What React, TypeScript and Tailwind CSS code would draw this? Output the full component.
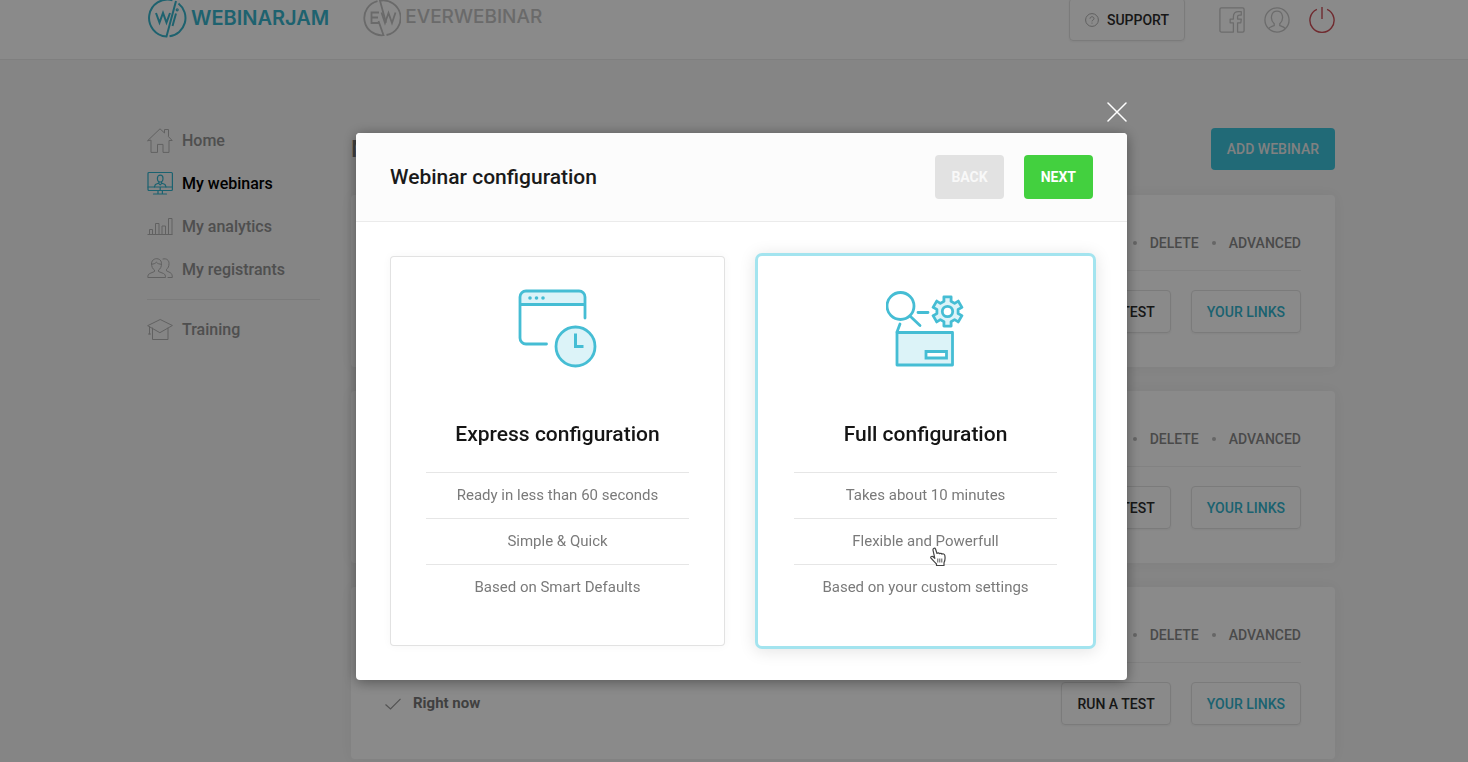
import React from "react";

const navItems = [
  { label: "Home", icon: HomeIcon },
  { label: "My webinars", icon: WebinarIcon, active: true },
  { label: "My analytics", icon: AnalyticsIcon },
  { label: "My registrants", icon: RegistrantsIcon },
];

const webinars = [{ id: 1 }, { id: 2 }, { id: 3, schedule: "Right now" }];

const options = [
  {
    title: "Express configuration",
    icon: ExpressIcon,
    points: ["Ready in less than 60 seconds", "Simple & Quick", "Based on Smart Defaults"],
  },
  {
    title: "Full configuration",
    icon: FullIcon,
    points: ["Takes about 10 minutes", "Flexible and Powerfull", "Based on your custom settings"],
    selected: true,
  },
];

function HomeIcon() {
  return (
    <svg viewBox="0 0 26 26" className="h-[26px] w-[26px]" fill="none" stroke="currentColor" strokeLinejoin="round" strokeLinecap="round">
      <path d="M.8 12.500 13 .8l4.500 4.200V1.500h4v7.200l3.700 3.800H22v11.900h-6v-8h-5.500v8H4V12.500z" />
    </svg>
  );
}

function WebinarIcon() {
  return (
    <svg viewBox="0 0 26 26" className="h-[26px] w-[26px]" fill="none" stroke="currentColor" strokeWidth="1.200" strokeLinejoin="round" strokeLinecap="round">
      <rect x="1" y="1.500" width="24.400" height="18" rx="1" />
      <path d="M1 16h24.400M11 19.500v3.200M15.400 19.500v3.200M6.500 23h13M13.200 16v3" />
      <path d="M10.400 7.200c0-4 5.600-4 5.600 0 0 2-1 3.800-2.800 3.800s-2.800-1.800-2.800-3.800zM11.900 10.800V12L8.400 13.500 7.400 16M14.500 10.800V12l3.500 1.500 1 2.500M11.600 12.300l1.600 1.600 1.600-1.600" />
    </svg>
  );
}

function AnalyticsIcon() {
  return (
    <svg viewBox="0 0 26 26" className="h-[26px] w-[26px]" fill="none" stroke="currentColor">
      <path d="M.5 20.500h25M2.500 20.500v-5h3v5M8.500 20.500V9.500h3.500v11M15 20.500V12h3.500v8.500M21.500 20.500V4.500H25v16" />
    </svg>
  );
}

function RegistrantsIcon() {
  return (
    <svg viewBox="0 0 26 26" className="h-[26px] w-[26px]" fill="none" stroke="currentColor" strokeLinejoin="round" strokeLinecap="round">
      <path d="M4.500 6.500c0-6.500 10-6.500 10 0 0 3-1 5.500-3 6.500v1.500l5 2c1.500.6 2 2 2 4H.8c0-2 .5-3.400 2-4l4.700-2V13c-2-1-3-3.500-3-6.500z" />
      <path d="M4.700 7.200c2 0 3.600-.8 4.600-2 1.200 1.400 3 2 5 2M16 2c3.500-1 6 1.200 6 4.500 0 3-1 4.800-2.500 5.800v1.500l3.800 1.900c1.500.8 2 2.500 2 4.800H21" />
    </svg>
  );
}

function TrainingIcon() {
  return (
    <svg viewBox="0 0 26 26" className="h-[26px] w-[26px]" fill="none" stroke="currentColor" strokeLinejoin="round" strokeLinecap="round">
      <path d="M1 8.500 13.200 2.500 25.400 8.500 13.200 15.500zM5.500 11v11.500H21V11M2.500 9.500V17M1.500 17h2" />
    </svg>
  );
}

function ExpressIcon() {
  return (
    <svg viewBox="0 0 80 80" className="h-20 w-20" fill="none" stroke="#45bdd4" strokeWidth="2.800" strokeLinecap="round">
      <path d="M2 16.500V9A6 6 0 0 1 8 3H61a6 6 0 0 1 6 6v7.500z" fill="#dcf3f8" stroke="none" />
      <path d="M67 30V9a6 6 0 0 0-6-6H8a6 6 0 0 0-6 6v41a6 6 0 0 0 6 6H28.500M2 16.500h65" />
      <g fill="#45bdd4" stroke="none">
        <circle cx="12" cy="10" r="1.800" />
        <circle cx="18.500" cy="10" r="1.800" />
        <circle cx="25" cy="10" r="1.800" />
      </g>
      <circle cx="57.500" cy="58.500" r="19.500" fill="#dcf3f8" />
      <path d="M57.500 47v11.500h6.500" strokeWidth="3" strokeLinecap="square" />
    </svg>
  );
}

// six square teeth around the hub
const gearPoints = Array.from({ length: 6 }, (_, i) => i * 60 - 90)
  .flatMap((a) => [
    [a - 19, 10.8],
    [a - 14, 15],
    [a + 14, 15],
    [a + 19, 10.8],
  ])
  .map(([a, r]) => {
    const t = (a * Math.PI) / 180;
    return `${(61.5 + r * Math.cos(t)).toFixed(2)},${(23.5 + r * Math.sin(t)).toFixed(2)}`;
  })
  .join(" ");

function FullIcon() {
  return (
    <svg viewBox="0 0 80 80" className="h-20 w-20" fill="none" stroke="#45bdd4" strokeWidth="2.800" strokeLinecap="round">
      <circle cx="14.500" cy="18" r="13.500" />
      <path d="M24.500 28.500 34 37.500M32 24.500h10M14 36l-3 8" />
      <polygon points={gearPoints} fill="#dcf3f8" strokeLinejoin="round" />
      <circle cx="61.500" cy="23.500" r="5.200" fill="#fff" />
      <path d="M11 44.500h55.500v32.500H11z" fill="#dcf3f8" strokeLinejoin="round" />
      <path d="M40 63.500h20.500v6.500H40z" fill="#fff" strokeLinecap="butt" />
    </svg>
  );
}

function WebinarCard({ schedule }: { schedule?: string }) {
  return (
    <article className="rounded bg-white px-[34px] pb-[34px] shadow-[0_0_14px_rgba(0,0,0,0.04)]">
      <div className="flex h-[76px] items-center justify-end gap-[13px] border-b border-[#f0f0f0] pt-5 text-sm font-medium text-[#8a8a8a]">
        <span className="h-1 w-1 rounded-full bg-[#bcbcbc]" />
        <a href="#delete">DELETE</a>
        <span className="h-1 w-1 rounded-full bg-[#bcbcbc]" />
        <a href="#advanced">ADVANCED</a>
      </div>
      <div className="flex items-center pt-[19px]">
        {schedule && (
          <>
            <svg viewBox="0 0 16 12" className="mr-3 h-3 w-4" fill="none" stroke="#999" strokeWidth="1.200">
              <path d="M.5 6.500 5.500 11 15.500.8" />
            </svg>
            <span className="text-[15px] font-bold text-[#777]">{schedule}</span>
          </>
        )}
        <button className="ml-auto h-[43px] rounded border border-[#e4e4e4] px-[15px] text-sm font-medium text-[#2b2b2b] shadow-xs">
          RUN A TEST
        </button>
        <button className="ml-5 h-[43px] rounded border border-[#e4e4e4] px-[15px] text-sm font-medium text-[#33b5cf] shadow-xs">
          YOUR LINKS
        </button>
      </div>
    </article>
  );
}

function Header() {
  return (
    <header className="-mt-5 h-20 border-b border-[#eaeaea] bg-white pl-3.5">
      <div className="mx-auto flex h-full max-w-[1188px] items-center">
        <a href="#webinarjam" className="flex items-center gap-1 pb-1 font-['Inter'] text-xl font-semibold text-[#39b6cd]">
          <svg viewBox="0 0 40 40" className="h-10 w-10" fill="none" stroke="currentColor" strokeWidth="2">
            <path d="M25.500 2.200A18.500 18.500 0 1 0 19.500 38.500L29 3M31.500 5.500A18.500 18.500 0 0 1 22.500 38.300" />
            <path d="M9 15l3.500 9.500L16 15l3.500 9.500L23 15M29 15.500l-3.500 12.500" />
            <circle cx="30.200" cy="11.800" r=".6" />
          </svg>
          WEBINARJAM
        </a>
        <a href="#everwebinar" className="ml-[34px] flex items-center gap-1 pb-1 font-['Inter'] text-[19px] font-medium text-[#c4c4c4]">
          <svg viewBox="0 0 38 38" className="h-[38px] w-[38px]" fill="none" stroke="currentColor" strokeWidth="1.800">
            <path d="M14.500 2.200A17.300 17.300 0 0 0 20.500 36.200L15.500 22M23.500 36A17.300 17.300 0 0 0 17 1.800l6 22" />
            <path d="M16 13.500H8.500v10.500H16M8.500 18.500H15M18.500 13.500l3.500 10.500 3.500-10 3.500 10 3.500-10.500" />
          </svg>
          EVERWEBINAR
        </a>
        <button className="ml-auto flex h-[43px] items-center gap-2 rounded border border-[#e4e4e4] px-[15px] text-sm font-medium text-[#2b2b2b] shadow-xs">
          <svg viewBox="0 0 14 14" className="h-3.5 w-3.5" fill="none" stroke="#b0b0b0">
            <circle cx="7" cy="7" r="6.400" />
            <path d="M5 5.700c0-2.600 4-2.600 4 0C9 7 7 7 7 8.400M7 9.600v1" />
          </svg>
          SUPPORT
        </button>
        <a href="#facebook" aria-label="Facebook" className="ml-[34px] text-[#c8c8c8]">
          <svg viewBox="0 0 28 28" className="h-[26px] w-[26px]" fill="none" stroke="currentColor" strokeWidth="1.400" strokeLinejoin="round">
            <path d="M15.500 27H2.500A1.500 1.500 0 0 1 1 25.500v-23A1.500 1.500 0 0 1 2.500 1h23A1.500 1.500 0 0 1 27 2.500v23a1.500 1.500 0 0 1-1.500 1.500H20V17h3.500l.5-4h-4v-2.500c0-1.200.5-1.800 2-1.800h2V5h-3c-4 0-5.500 2-5.500 5.500V13H12v4h3.500z" />
          </svg>
        </a>
        <a href="#profile" aria-label="Profile" className="ml-[19px] text-[#c8c8c8]">
          <svg viewBox="0 0 28 28" className="h-[26px] w-[26px]" fill="none" stroke="currentColor" strokeWidth="1.400">
            <circle cx="14" cy="14" r="13" />
            <path d="M5 23.200c1-1.500 4-2.500 6-3.200v-2c-5-4.500-3.500-13.500 3-13.500s8 9 3 13.500v2c2 .7 5 1.700 6 3.200" />
          </svg>
        </a>
        <a href="#logout" aria-label="Log out" className="ml-[19px] text-[#cf4f58]">
          <svg viewBox="0 0 28 28" className="h-[26px] w-[26px]" fill="none" stroke="currentColor" strokeWidth="1.500">
            <path d="M14 0v13M8.500 2.500a13 13 0 1 0 11 0" />
          </svg>
        </a>
      </div>
    </header>
  );
}

function Sidebar() {
  return (
    <nav className="w-[173px] shrink-0 pt-[59px] text-base font-medium text-[#929292]">
      {navItems.map(({ label, icon: Icon, active }) => (
        <a key={label} href="#nav" className={active ? "flex h-[43px] items-center gap-[9px] text-black" : "flex h-[43px] items-center gap-[9px]"}>
          <span className={active ? "text-[#33b5cf]" : "text-[#b4b4b4]"}>
            <Icon />
          </span>
          {label}
        </a>
      ))}
      <hr className="my-2 border-[#e4e4e4]" />
      <a href="#training" className="flex h-[43px] items-center gap-[9px]">
        <span className="text-[#b4b4b4]">
          <TrainingIcon />
        </span>
        Training
      </a>
    </nav>
  );
}

function ConfigurationModal() {
  return (
    <div className="fixed inset-0 bg-black/46 pt-[133px] pl-[15px]">
      <section
        role="dialog"
        aria-label="Webinar configuration"
        className="relative mx-auto max-w-[771px] rounded bg-white shadow-[0_2px_14px_rgba(0,0,0,0.4)]"
      >
        <button aria-label="Close" className="absolute -top-[31px] right-0 text-white">
          <svg viewBox="0 0 20 20" className="h-5 w-5" stroke="currentColor" strokeWidth="1.500" strokeLinecap="round">
            <path d="M1 1l18 18M19 1 1 19" />
          </svg>
        </button>
        <div className="flex h-[89px] items-center gap-5 rounded-t border-b border-[#ebebeb] bg-[#fcfcfc] px-[34px]">
          <h2 className="mr-auto text-[21px] leading-8 font-medium text-[#1a1a1a]">Webinar configuration</h2>
          <button className="h-11 rounded bg-[#e2e2e2] px-4 text-sm font-bold text-[#f8f8f8]">BACK</button>
          <button className="h-11 rounded bg-[#43d03f] px-[17px] text-sm font-bold text-white">NEXT</button>
        </div>
        <div className="grid grid-cols-2 gap-[33px] p-[34px]">
          {options.map(({ title, icon: Icon, points, selected }) => (
            <button
              key={title}
              aria-pressed={!!selected}
              className={
                selected
                  ? "flex flex-col items-center rounded bg-white px-9 pt-8 pb-9 ring-3 ring-[#a3e4ef] shadow-[0_2px_16px_4px_rgba(0,0,0,0.1)]"
                  : "flex flex-col items-center rounded bg-white px-9 pt-8 pb-9 ring-1 ring-[#e2e2e2] ring-inset shadow-[0_0_10px_rgba(0,0,0,0.04)]"
              }
            >
              <Icon />
              <span className="mt-[50px] mb-[22px] text-[21px] leading-8 font-medium text-[#151515]">{title}</span>
              {points.map((point) => (
                <span key={point} className="w-full border-t border-[#e6e6e6] text-[15px] leading-[45px] text-[#7a7a7a]">
                  {point}
                </span>
              ))}
            </button>
          ))}
        </div>
        {/* hand pointer over the second option */}
        <svg viewBox="0 0 16 20" className="absolute top-[414px] left-[574px] h-5 w-4" fill="#fff" stroke="#444" strokeWidth="1.200" strokeLinejoin="round">
          <path d="M4.800 11.300 3 3.200C2.800 1 5 .6 5.600 2.200L7 6.500c.6-.8 2-.8 2.500.2.700-.7 2-.5 2.500.4 1-.6 2.500 0 2.800 1.200.5 2.500.6 4.500-.8 7.400v2.800H6.500V17C4.500 15 3 13.500 1 11.200.2 10 1.600 8.800 2.800 9.500z" />
          <path d="M7.800 11.500v4M9.800 11.500v4M11.800 11.500v4" strokeWidth=".9" />
        </svg>
      </section>
    </div>
  );
}

const App: React.FC = () => {
  return (
    <div className="h-screen overflow-hidden bg-[#f5f5f5] font-['Roboto',sans-serif]">
      <Header />
      <div className="pl-3.5">
        <div className="mx-auto flex max-w-[1188px] gap-[31px]">
          <Sidebar />
          <main className="min-w-0 grow pt-[68px]">
            <div className="mb-[25px] flex items-center justify-between">
              <h1 className="text-2xl font-medium text-[#777]">My webinars</h1>
              <button className="h-[42px] rounded bg-[#3dc4dd] px-4 text-sm font-medium text-[#eee]">ADD WEBINAR</button>
            </div>
            <div className="flex flex-col gap-6">
              {webinars.map((webinar) => (
                <WebinarCard key={webinar.id} schedule={webinar.schedule} />
              ))}
            </div>
          </main>
        </div>
      </div>
      <ConfigurationModal />
    </div>
  );
};

export default App;
